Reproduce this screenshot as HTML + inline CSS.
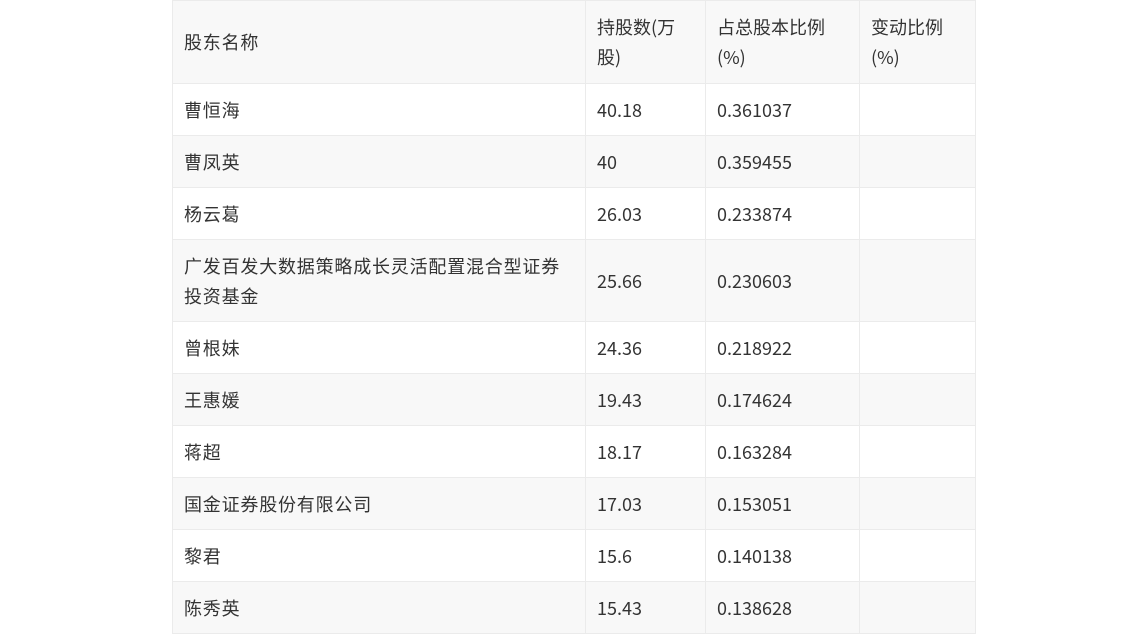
<!DOCTYPE html>
<html><head><meta charset="utf-8"><style>
body{margin:0;background:#fff;width:1148px;height:635px;overflow:hidden}
table{position:absolute;left:172px;top:0;border-collapse:collapse;font-family:"Noto Sans CJK SC","Liberation Sans",sans-serif;font-size:18px;color:#333;table-layout:fixed}
td{border:1px solid #ebebeb;padding:0 14px 0 11px;line-height:30px;vertical-align:middle;word-break:break-all}
td:first-child{letter-spacing:0.8px}
tr{height:52px}
tr:nth-child(odd){background:#f8f8f8}
tr.h{height:83px}
tr.t{height:82px}
</style></head><body>
<table>
<colgroup><col style="width:413px"><col style="width:120px"><col style="width:154px"><col style="width:116px"></colgroup>
<tr class="h"><td>股东名称</td><td>持股数(万股)</td><td>占总股本比例(%)</td><td>变动比例(%)</td></tr>
<tr><td>曹恒海</td><td>40.18</td><td>0.361037</td><td></td></tr>
<tr><td>曹凤英</td><td>40</td><td>0.359455</td><td></td></tr>
<tr><td>杨云葛</td><td>26.03</td><td>0.233874</td><td></td></tr>
<tr class="t"><td>广发百发大数据策略成长灵活配置混合型证券<br>投资基金</td><td>25.66</td><td>0.230603</td><td></td></tr>
<tr><td>曾根妹</td><td>24.36</td><td>0.218922</td><td></td></tr>
<tr><td>王惠媛</td><td>19.43</td><td>0.174624</td><td></td></tr>
<tr><td>蒋超</td><td>18.17</td><td>0.163284</td><td></td></tr>
<tr><td>国金证券股份有限公司</td><td>17.03</td><td>0.153051</td><td></td></tr>
<tr><td>黎君</td><td>15.6</td><td>0.140138</td><td></td></tr>
<tr><td>陈秀英</td><td>15.43</td><td>0.138628</td><td></td></tr>
</table>
</body></html>
